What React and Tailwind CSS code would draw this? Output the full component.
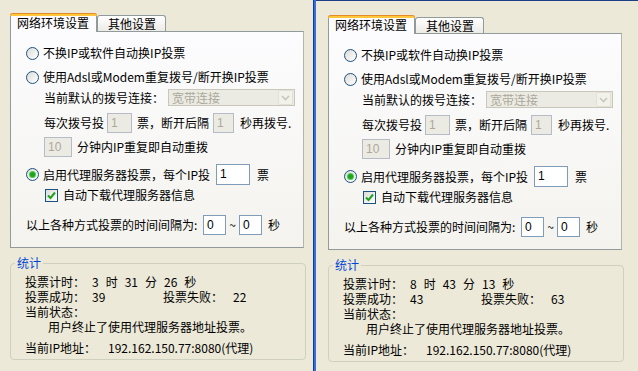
import React from "react";

const Radio = ({ checked }) => (
    <span className="flex h-[13px] w-[13px] shrink-0 items-center justify-center rounded-full border border-[#1c5180] bg-linear-to-br from-[#dcdcd7] to-white">
        { checked && <span className="h-[5px] w-[5px] rounded-full bg-[#21a121] shadow-[0_0_0_1px_#4fcf4f]" /> }
    </span>
);

const Checkbox = () => (
    <span className="flex h-[13px] w-[13px] shrink-0 items-center justify-center border border-[#1c5180] bg-linear-to-br from-[#dcdcd7] to-white">
        <svg width="11" height="11" viewBox="0 0 11 11">
            <path d="M2 5.5 L4.5 8 L9 2.5" fill="none" stroke="#21a121" strokeWidth="2" />
        </svg>
    </span>
);

const Input = ({ value, className, disabled }) => (
    <span
        className={ `flex shrink-0 items-start border pl-[3px] pt-[2px] font-['Liberation_Sans'] text-[12px] leading-[14px] ${className} ${
            disabled ? "border-[#b6bcc6] bg-[#ecebe3] text-[#aca899]" : "border-[#7f9db9] bg-white text-black"
        }` }
    >
        { value }
    </span>
);

const Combo = () => (
    <span className="flex h-[17px] w-[127px] items-center border border-[#c9c7ba] bg-[#ebebe4]">
        <span className="flex-1 pl-[3px] text-[#aca899]">宽带连接</span>
        <span className="mr-px flex h-[15px] w-[15px] items-center justify-center rounded-[2px] border border-[#e3e1d6] bg-[#f2f1ea]">
            <svg width="9" height="6" viewBox="0 0 9 6">
                <path d="M1 1 L4.5 4.5 L8 1" fill="none" stroke="#c9c7ba" strokeWidth="1.6" />
            </svg>
        </span>
    </span>
);

const Panel = ({ className, hours, minutes, seconds, success, fail }) => (
    <div className={ className }>
        <div className="w-[294px]">
            <div className="flex h-[18px] items-end">
                <div className="relative z-10 mb-[-1px] flex h-[19px] w-[87px] flex-col rounded-t-[3px] border-x border-[#919b9c] bg-[#fcfcfe]">
                    <div className="-mx-px h-[3px] rounded-t-[3px] border-t border-[#e68b2c] bg-[#ffc83c]" />
                    <span className="pl-[6px] leading-[14px]">网络环境设置</span>
                </div>
                <div className="flex h-[16px] w-[69px] items-center rounded-t-[3px] border-x border-t border-[#919b9c] bg-linear-to-b from-white to-[#ecebe6] pl-[10px] leading-[14px]">
                    其他设置
                </div>
            </div>
            <div className="border border-[#919b9c] border-r-[#b5b5ac] bg-linear-to-b from-[#fcfcfe] to-[#f4f3ee] pb-[12px] pl-[15px]">
                <div className="mt-[11px] flex h-[20px] items-center gap-[4px]">
                    <Radio />
                    <span>不换IP或软件自动换IP投票</span>
                </div>
                <div className="mt-[4px] flex h-[20px] items-center gap-[4px]">
                    <Radio />
                    <span>使用Adsl或Modem重复拨号/断开换IP投票</span>
                </div>
                <div className="ml-[18px] flex h-[21px] items-center">
                    <span className="w-[124px]">当前默认的拨号连接：</span>
                    <Combo />
                </div>
                <div className="ml-[18px] mt-[5px] flex h-[20px] items-center">
                    <span className="w-[63px]">每次拨号投</span>
                    <Input value="1" disabled className="h-[20px] w-[25px]" />
                    <span className="ml-[5px] w-[76px]">票，断开后隔</span>
                    <Input value="1" disabled className="h-[20px] w-[21px]" />
                    <span className="ml-[6px]">秒再拨号.</span>
                </div>
                <div className="ml-[18px] mt-[4px] flex h-[20px] items-center">
                    <Input value="10" disabled className="h-[20px] w-[28px]" />
                    <span className="ml-[5px]">分钟内IP重复即自动重拨</span>
                </div>
                <div className="mt-[7px] flex h-[21px] items-center">
                    <Radio checked />
                    <span className="ml-[4px] w-[173px]">启用代理服务器投票，每个IP投</span>
                    <Input value="1" className="h-[21px] w-[34px]" />
                    <span className="ml-[7px]">票</span>
                </div>
                <div className="ml-[19px] mt-[1px] flex h-[18px] items-center gap-[5px]">
                    <Checkbox />
                    <span>自动下载代理服务器信息</span>
                </div>
                <div className="mt-[11px] flex h-[20px] items-center">
                    <span className="w-[177px]">以上各种方式投票的时间间隔为:</span>
                    <Input value="0" className="h-[20px] w-[23px]" />
                    <span className="w-[13px] text-center">~</span>
                    <Input value="0" className="h-[20px] w-[23px]" />
                    <span className="ml-[6px]">秒</span>
                </div>
            </div>
        </div>

        <div className="relative mt-[15px] w-[296px] rounded-[4px] border border-[#d0d0bf] pb-[4px] pl-[14px] pt-[10px] leading-[15px]">
            <span className="absolute left-[4px] top-[-8px] bg-[#ece9d8] px-[2px] leading-[14px] text-[#0046d5]">统计</span>
            <div className="flex">
                <span className="w-[67px]">投票计时：</span>
                <span className="flex gap-[7px]">
                    <span>{ hours }</span><span>时</span><span>{ minutes }</span><span>分</span><span>{ seconds }</span><span>秒</span>
                </span>
            </div>
            <div className="grid grid-cols-[67px_71px_70px_auto]">
                <span>投票成功：</span>
                <span>{ success }</span>
                <span>投票失败：</span>
                <span>{ fail }</span>
            </div>
            <div>当前状态：</div>
            <div className="pl-[23px]">用户终止了使用代理服务器地址投票。</div>
            <div className="mt-[6px] flex">
                <span className="w-[83px]">当前IP地址：</span>
                <span>192.162.150.77:8080(代理)</span>
            </div>
        </div>
    </div>
);

const App = () => {
    return (
        <div className="flex h-[371px] w-[638px] overflow-hidden bg-[#ece9d8] font-['SimSun','Noto_Sans_CJK_SC',sans-serif] text-[12px] leading-[14px] text-black">
            <Panel className="w-[313px] shrink-0 pl-[10px] pt-[13px]" hours="3" minutes="31" seconds="26" success="39" fail="22" />
            <div className="w-[3px] shrink-0 border-l border-[#0c3a9c] bg-[#3a6fd8]" />
            <Panel className="flex-1 border-t border-[#1d3f87] pl-[12px] pt-[14px]" hours="8" minutes="43" seconds="13" success="43" fail="63" />
        </div>
    );
};

export default App;
